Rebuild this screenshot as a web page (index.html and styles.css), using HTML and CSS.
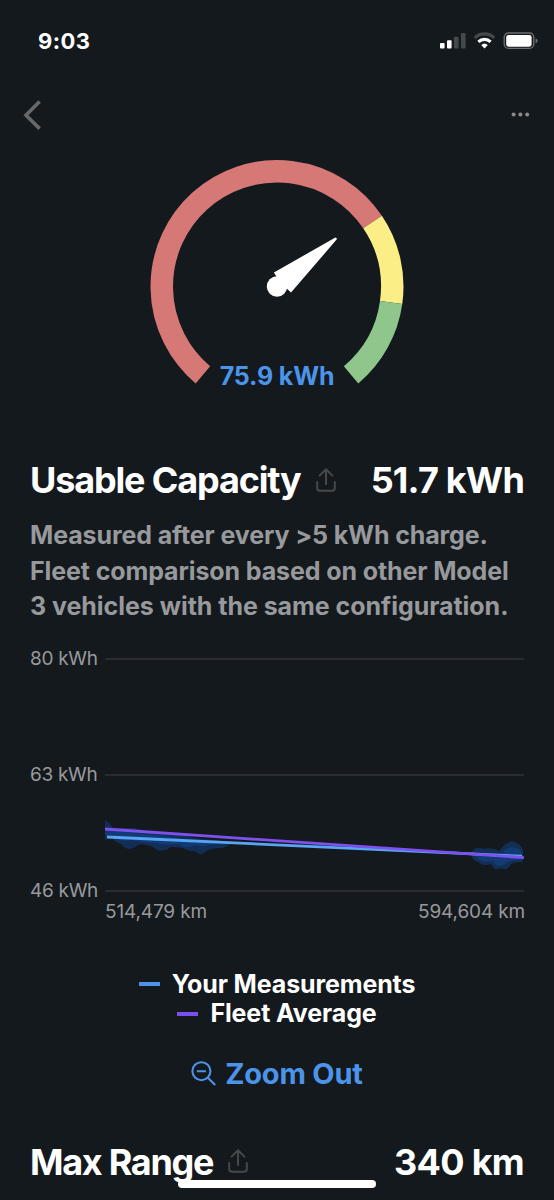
FILE: index.html
```html
<!DOCTYPE html>
<html lang="en">
<head>
    <meta charset="UTF-8">
    <meta name="viewport" content="width=device-width, initial-scale=1.0">
    <title>Battery - Usable Capacity</title>
    <link rel="stylesheet" href="styles.css">
</head>
<body>
    <div class="screen">
        <header class="status-bar">
            <span class="time">9:03</span>
            <svg class="status-icons" width="98" height="18" viewBox="0 0 98 18">
                <g fill="#fff">
                    <rect x="0" y="11" width="4.6" height="5.4" rx="1"/>
                    <rect x="7" y="8.3" width="4.6" height="8.1" rx="1"/>
                </g>
                <g fill="#45494c">
                    <rect x="14" y="4.8" width="4.6" height="11.6" rx="1"/>
                    <rect x="21" y="1" width="4.6" height="15.4" rx="1"/>
                </g>
                <path d="M34.8 5.8 a14.2 14.2 0 0 1 19.4 0" fill="none" stroke="#45494c" stroke-width="3.2"/>
                <path d="M38.4 9.8 a8.9 8.9 0 0 1 12.2 0" fill="none" stroke="#fff" stroke-width="3.2"/>
                <path d="M41.2 13 a4.9 4.9 0 0 1 6.6 0 L44.5 16.6 Z" fill="#fff"/>
                <rect x="64.2" y="1" width="29.6" height="15.4" rx="4.4" fill="none" stroke="#6c6f71" stroke-width="1.4"/>
                <rect x="66.2" y="2.9" width="25.4" height="11.8" rx="2.4" fill="#fff"/>
                <path d="M95.6 6.2 q2 .8 2 2.5 t-2 2.5 Z" fill="#6c6f71"/>
            </svg>
        </header>

        <nav class="nav-bar">
            <svg width="18" height="30" viewBox="0 0 18 30">
                <path d="M16.6 1.5 L3 15.2 L16.6 28.6" fill="none" stroke="#66696b" stroke-width="3.6"/>
            </svg>
            <svg width="20" height="6" viewBox="0 0 20 6" fill="#898b8d">
                <circle cx="2.6" cy="2.6" r="2"/>
                <circle cx="9.4" cy="2.6" r="2"/>
                <circle cx="16.2" cy="2.6" r="2"/>
            </svg>
        </nav>

        <section class="gauge">
            <svg width="260" height="230" viewBox="-130 -129.5 260 230">
                <g fill="none" stroke-width="22.5">
                    <path d="M-74.08 88.29 A115.25 115.25 0 1 1 95.55 -64.45" stroke="#d67876"/>
                    <path d="M95.55 -64.45 A115.25 115.25 0 0 1 114.13 16.04" stroke="#fcee86"/>
                    <path d="M114.13 16.04 A115.25 115.25 0 0 1 74.08 88.29" stroke="#8fc68b"/>
                </g>
                <!-- needle -->
                <circle cx="0" cy="0" r="10.2" fill="#fff"/>
                <path d="M0 0 L-.3 -9.6 L-3.1 -14 L58.4 -49 Q60.4 -48.7 59.6 -46.9 L14 6 L10 2.2 Z" fill="#fff"/>
            </svg>
            <span class="gauge-value">75.9 kWh</span>
        </section>

        <section class="metric">
            <div class="metric-header">
                <h2 class="usable">Usable Capacity</h2>
                <svg class="share" width="20" height="25" viewBox="0 0 20 25">
                    <path d="M10 16 V2 M3.6 7.6 L10 1.2 L16.4 7.6 M1.2 14 V20 Q1.2 22.8 4 22.8 H16 Q18.8 22.8 18.8 20 V14"/>
                </svg>
                <span class="metric-value kwh">51.7 kWh</span>
            </div>
            <p class="description">
                Measured after every &gt;5 kWh charge.<br>
                Fleet comparison based on other Model<br>
                <span class="last-line">3 vehicles with the same configuration.</span>
            </p>
        </section>

        <section class="chart">
            <div class="y-axis">
                <span>80 kWh</span>
                <span>63 kWh</span>
                <span>46 kWh</span>
            </div>
            <div class="plot">
                <svg width="420" height="240" viewBox="0 0 420 240">
                    <g stroke="#3f4346" stroke-width="1.2">
                        <line x1="0" y1="5" x2="419" y2="5"/>
                        <line x1="0" y1="121" x2="419" y2="121"/>
                        <line x1="0" y1="237" x2="419" y2="237"/>
                    </g>
                    <!-- single measurements -->
                    <g class="points">
                        <path d="M0 166 Q4 168 8 174 L28 174 L46 178 L66 178 L90 184 L126 188 Q124 193 116 194 Q104 194 99 199 Q94 202 90 197 Q84 198 78 194 Q72 193 66 193 Q60 198 52 196 Q48 192 41 191 Q34 189 30 193 Q22 198 16 190 Q8 187 6 182 L0 186 Z"/>
                        <path d="M0 174 L20 178 L50 181 L90 186 L112 189 Q100 194 90 191 Q80 196 74 190 Q58 192 52 189 Q36 189 28 186 Q14 189 8 181 L0 181 Z"/>
                        <path d="M366 199 Q371 191 378 195 Q388 193 394 197 Q400 189 407 187 Q416 190 418 196 V208 Q410 208 406 210 Q402 218 396 214 Q390 218 386 210 Q378 213 373 208 Q367 207 366 199 Z"/>
                        <path d="M370 202 Q378 196 388 202 Q396 203 400 196 Q408 190 416 197 V206 Q404 206 400 210 Q392 215 388 207 Q376 210 370 202 Z"/>
                    </g>
                    <line x1="2" y1="183" x2="417" y2="202.2" stroke="#59a5f5" stroke-width="2.8"/>
                    <line x1="0" y1="175" x2="419" y2="203.6" stroke="#7e50ee" stroke-width="2.8"/>
                </svg>
                <div class="x-axis">
                    <span>514,479 km</span>
                    <span>594,604 km</span>
                </div>
            </div>
        </section>

        <div class="legend">
            <div class="legend-item measurements"><i></i>Your Measurements</div>
            <div class="legend-item fleet"><i></i>Fleet Average</div>
        </div>

        <button class="zoom-out">
            <svg width="26" height="26" viewBox="0 0 26 26" fill="none" stroke="#4c94ea" stroke-width="2.1">
                <circle cx="10.4" cy="10.2" r="9"/>
                <path d="M16.9 16.7 L24.2 24 M5.8 10.2 H15"/>
            </svg>
            Zoom Out
        </button>

        <section class="metric max-range">
            <div class="metric-header">
                <h2 class="range">Max Range</h2>
                <svg class="share" width="20" height="25" viewBox="0 0 20 25">
                    <path d="M10 16 V2 M3.6 7.6 L10 1.2 L16.4 7.6 M1.2 14 V20 Q1.2 22.8 4 22.8 H16 Q18.8 22.8 18.8 20 V14"/>
                </svg>
                <span class="metric-value km">340 km</span>
            </div>
        </section>

        <div class="home-indicator"></div>
    </div>
</body>
</html>
```
FILE: styles.css
```css
* {
    box-sizing: border-box;
}
body {
    margin: 0;
    background: #14191d;
    color: #fff;
    font-family: 'Inter', 'Liberation Sans', sans-serif;
}
.screen {
    position: relative;
    width: 554px;
    height: 1200px;
    overflow: hidden;
}
.status-bar {
    display: flex;
    justify-content: space-between;
    align-items: center;
    height: 82px;
    padding: 0 16px 0 38px;
}
.time {
    font-size: 22px;
    font-weight: 700;
    letter-spacing: 0.4px;
}
.nav-bar {
    display: flex;
    justify-content: space-between;
    align-items: center;
    height: 66px;
    padding: 0 23px;
}
.gauge {
    display: flex;
    flex-direction: column;
    align-items: center;
    height: 306px;
    padding-top: 9px;
}
.gauge svg {
    display: block;
}
.gauge-value {
    margin-top: -27px;
    color: #4c94ea;
    font-size: 25px;
    font-weight: 650;
    line-height: 32px;
    letter-spacing: -0.15px;
}
.metric {
    padding: 0 30px;
}
.metric-header {
    display: flex;
    align-items: center;
    height: 52px;
}
h2,
.metric-value {
    margin: 0;
    font-size: 36px;
    font-weight: 700;
    line-height: 52px;
    letter-spacing: -1.15px;
    white-space: nowrap;
}
h2.range {
    letter-spacing: -1.3px;
}
.metric-value {
    margin-left: auto;
}
.metric-value.kwh {
    letter-spacing: -0.8px;
}
.metric-value.km {
    letter-spacing: -0.7px;
}
.share {
    margin-left: 15px;
    fill: none;
    stroke: #45494c;
    stroke-width: 2;
    stroke-linecap: round;
    stroke-linejoin: round;
}
.description {
    margin: 12px 0 0;
    color: #97999c;
    font-size: 25px;
    font-weight: 650;
    line-height: 35.5px;
    letter-spacing: -0.11px;
    white-space: nowrap;
}
.last-line {
    letter-spacing: -0.04px;
}
.chart {
    display: flex;
    height: 272px;
    margin: 29px 29px 0 30px;
    color: #97999c;
    font-size: 19px;
}
.y-axis {
    display: flex;
    flex-direction: column;
    justify-content: space-between;
    width: 75px;
    height: 256px;
    margin-top: -7px;
    line-height: 24px;
    letter-spacing: -0.3px;
    white-space: nowrap;
}
.plot {
    width: 420px;
}
.plot svg {
    display: block;
}
.points path {
    fill: #124a9c;
    opacity: 0.45;
}
.x-axis {
    display: flex;
    justify-content: space-between;
    margin-top: 6px;
    line-height: 24px;
    letter-spacing: -0.15px;
}
.legend {
    display: flex;
    flex-direction: column;
    align-items: center;
    margin-top: 44px;
    font-size: 25px;
    font-weight: 650;
    line-height: 29.5px;
    letter-spacing: -0.12px;
}
.legend-item {
    display: flex;
    align-items: center;
}
.legend-item i {
    width: 21px;
    height: 4px;
    margin-right: 12px;
    background: #4c94ea;
}
.legend-item.fleet i {
    background: #7850ee;
}
.zoom-out {
    display: flex;
    align-items: center;
    justify-content: center;
    gap: 8px;
    width: 100%;
    height: 36px;
    margin-top: 27px;
    padding: 0;
    border: none;
    background: none;
    color: #4c94ea;
    font-family: inherit;
    font-size: 29px;
    font-weight: 650;
    letter-spacing: -0.2px;
}
.max-range {
    margin-top: 44px;
}
.home-indicator {
    position: absolute;
    left: 178px;
    bottom: 12px;
    width: 198px;
    height: 8px;
    border-radius: 4px;
    background: #fff;
}
```
